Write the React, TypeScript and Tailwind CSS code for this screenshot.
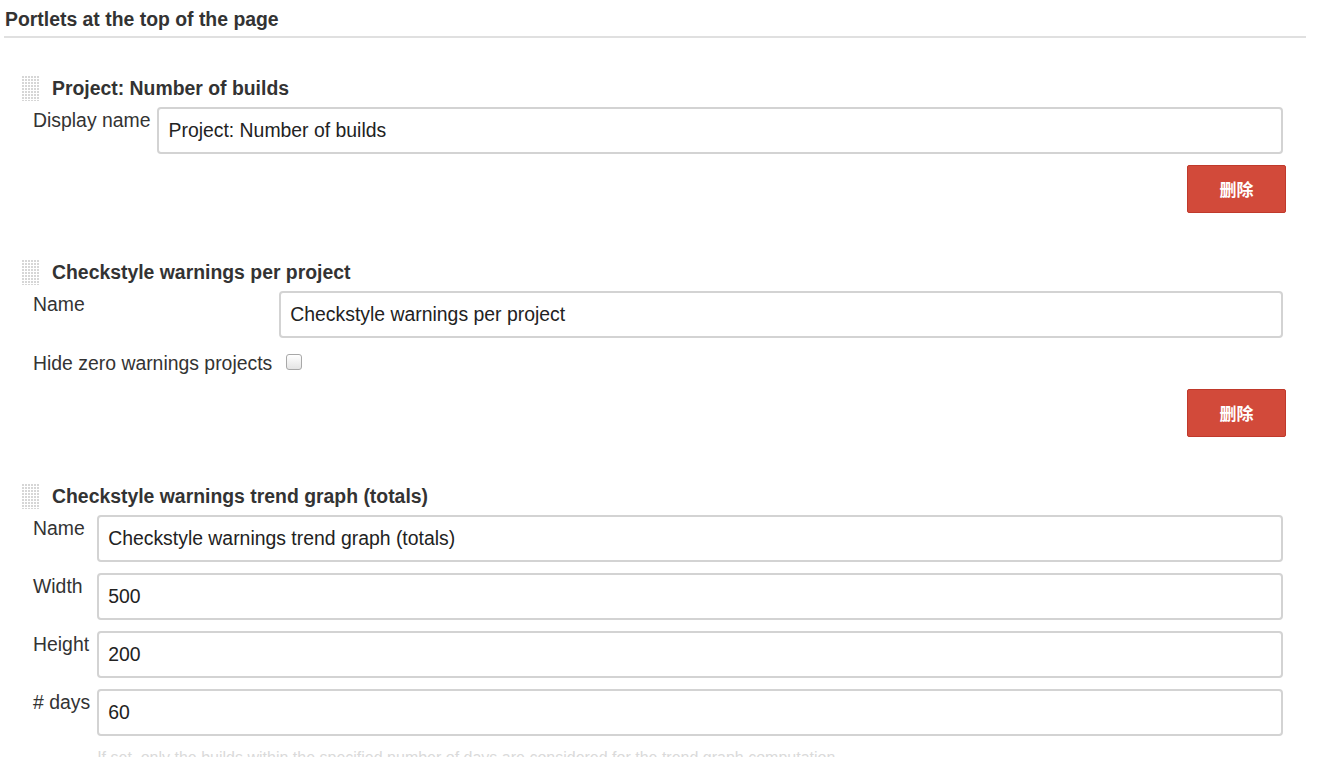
import React from "react";

type Field = {
  label: string;
  value: string;
};

type Portlet = {
  title: string;
  fields: Field[];
  checkbox?: string;
  help?: string;
  deletable: boolean;
};

const portlets: Portlet[] = [
  {
    title: "Project: Number of builds",
    fields: [{ label: "Display name", value: "Project: Number of builds" }],
    deletable: true,
  },
  {
    title: "Checkstyle warnings per project",
    fields: [{ label: "Name", value: "Checkstyle warnings per project" }],
    checkbox: "Hide zero warnings projects",
    deletable: true,
  },
  {
    title: "Checkstyle warnings trend graph (totals)",
    fields: [
      { label: "Name", value: "Checkstyle warnings trend graph (totals)" },
      { label: "Width", value: "500" },
      { label: "Height", value: "200" },
      { label: "# days", value: "60" },
    ],
    help: "If set, only the builds within the specified number of days are considered for the trend graph computation.",
    deletable: false,
  },
];

const DragHandle = () => (
  <svg width="18" height="25" viewBox="0 0 18 25" className="shrink-0">
    <defs>
      <pattern id="dots" width="3" height="3" patternUnits="userSpaceOnUse">
        <rect x="0" y="0" width="2" height="2" fill="#d6d6d6" />
      </pattern>
    </defs>
    <rect x="0" y="0" width="18" height="25" fill="url(#dots)" />
  </svg>
);

const TextInput = ({ value }: { value: string }) => (
  <div className="h-[47px] w-full flex items-center rounded-[4px] border-2 border-[#d3d3d3] bg-white pl-[9px] text-[19.4px] text-[#222]">
    {value}
  </div>
);

function PortletBlock({ item }: { item: Portlet }) {
  return (
    <div className="pl-[18px] pr-[20px]">
      <div className="flex items-center h-[25px] gap-[12px]">
        <DragHandle />
        <span className="font-bold text-[19.4px] text-[#333]">{item.title}</span>
      </div>

      <div className="mt-[6px] pl-[11px] pr-[3px] grid grid-cols-[auto_1fr] gap-x-[7px] gap-y-[11px]">
        {item.fields.map((f) => (
          <React.Fragment key={f.label}>
            <div className="pt-[1px] leading-[24px] text-[19.4px] text-[#333] whitespace-nowrap">
              {f.label}
            </div>
            <TextInput value={f.value} />
          </React.Fragment>
        ))}
        {item.checkbox && (
          <>
            <div className="pt-[2px] leading-[24px] text-[19.4px] text-[#333] whitespace-nowrap h-[29px]">
              {item.checkbox}
            </div>
            <div className="pt-[5px] pl-[7px]">
              <div className="w-[16px] h-[16px] rounded-[3px] border border-[#a8a8a8] bg-linear-to-b from-white to-[#e4e4e4]" />
            </div>
          </>
        )}
        {item.help && (
          <>
            <div />
            <div className="mt-0 text-[16px] leading-[22px] text-[#dadada]">{item.help}</div>
          </>
        )}
      </div>

      {item.deletable && (
        <div className="flex justify-end mt-[11px]">
          <button className="w-[99px] h-[48px] rounded-[2px] border border-[#c0392b] bg-[#d24a3a] text-white font-bold text-[17px] [font-family:'Noto_Sans_CJK_SC',sans-serif]">
            删除
          </button>
        </div>
      )}
    </div>
  );
}

export default function App() {
  return (
    <div className="min-h-screen bg-white [font-family:'Liberation_Sans',Arial,sans-serif]">
      <div className="ml-[4px] w-[1302px]">
        <div className="pt-[7px] pb-[5px] border-b-2 border-[#e0e0e0] pl-[1px] font-bold text-[19.4px] leading-[24px] text-[#333]">
          Portlets at the top of the page
        </div>
        <div className="pt-[38px] flex flex-col gap-[47px]">
          {portlets.map((p) => (
            <PortletBlock key={p.title} item={p} />
          ))}
        </div>
      </div>
    </div>
  );
}
